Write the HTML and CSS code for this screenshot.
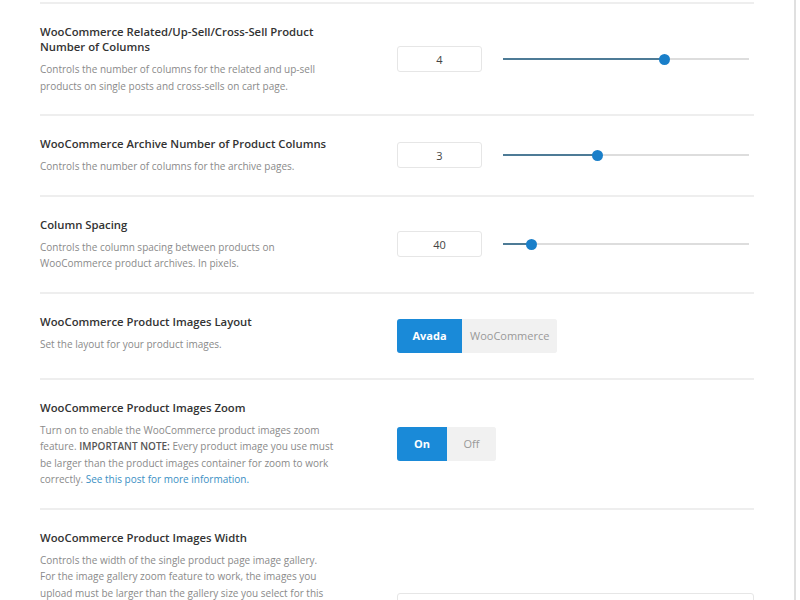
FILE: index.html
```html
<!DOCTYPE html>
<html lang="en">
<head>
  <meta charset="UTF-8">
  <meta name="viewport" content="width=device-width, initial-scale=1.0">
  <title>WooCommerce Options</title>
  <link rel="stylesheet" href="styles.css">
</head>
<body>
  <div class="options-panel">
    <div class="option-list">

      <div class="option-row">
        <div class="option-info">
          <h3>WooCommerce Related/Up-Sell/Cross-Sell Product Number of Columns</h3>
          <p>Controls the number of columns for the related and up-sell products on single posts and cross-sells on cart page.</p>
        </div>
        <div class="option-field">
          <input type="text" class="value-box" value="4">
          <div class="slider">
            <div class="slider-fill" style="width: 65.5%;"></div>
            <span class="slider-thumb" style="left: 65.5%;"></span>
          </div>
        </div>
      </div>

      <div class="option-row">
        <div class="option-info">
          <h3>WooCommerce Archive Number of Product Columns</h3>
          <p>Controls the number of columns for the archive pages.</p>
        </div>
        <div class="option-field">
          <input type="text" class="value-box" value="3">
          <div class="slider">
            <div class="slider-fill" style="width: 38.5%;"></div>
            <span class="slider-thumb" style="left: 38.5%;"></span>
          </div>
        </div>
      </div>

      <div class="option-row">
        <div class="option-info">
          <h3>Column Spacing</h3>
          <p>Controls the column spacing between products on WooCommerce product archives. In pixels.</p>
        </div>
        <div class="option-field">
          <input type="text" class="value-box" value="40">
          <div class="slider">
            <div class="slider-fill" style="width: 11.7%;"></div>
            <span class="slider-thumb" style="left: 11.7%;"></span>
          </div>
        </div>
      </div>

      <div class="option-row">
        <div class="option-info">
          <h3>WooCommerce Product Images Layout</h3>
          <p>Set the layout for your product images.</p>
        </div>
        <div class="option-field">
          <div class="button-set">
            <button type="button" class="active">Avada</button>
            <button type="button">WooCommerce</button>
          </div>
        </div>
      </div>

      <div class="option-row">
        <div class="option-info">
          <h3>WooCommerce Product Images Zoom</h3>
          <p>Turn on to enable the WooCommerce product images zoom feature. <strong>IMPORTANT NOTE:</strong> Every product image you use must be larger than the product images container for zoom to work correctly. <a href="#">See this post for more information.</a></p>
        </div>
        <div class="option-field">
          <div class="button-set switch">
            <button type="button" class="active">On</button>
            <button type="button">Off</button>
          </div>
        </div>
      </div>

      <div class="option-row">
        <div class="option-info">
          <h3>WooCommerce Product Images Width</h3>
          <p>Controls the width of the single product page image gallery. For the image gallery zoom feature to work, the images you upload must be larger than the gallery size you select for this option. Enter value including any valid CSS unit, ex: 500px.</p>
        </div>
        <div class="option-field field-top">
          <input type="text" class="text-box" value="">
        </div>
      </div>

    </div>
  </div>
</body>
</html>
```

FILE: styles.css
```css
html, body {
  margin: 0;
  padding: 0;
  background: #fff;
}
body {
  font-family: "Open Sans", "Noto Sans", Arial, sans-serif;
  color: #333;
}
.options-panel {
  width: 794px;
  height: 600px;
  overflow: hidden;
  border-right: 2px solid #e0e0e0;
}
.option-list {
  margin: 2px 40px 0;
  border-top: 2px solid #eeeeee;
}
.option-row {
  display: grid;
  grid-template-columns: 294.5px 1fr;
  column-gap: 62.5px;
  align-items: center;
  padding: 20px 0;
  border-bottom: 2px solid #eeeeee;
}
.option-info {
  align-self: start;
}
.option-info h3 {
  margin: 0 0 7px;
  font-size: 11.3px;
  font-weight: 600;
  line-height: 15px;
  color: #333;
}
.option-info p {
  margin: 0;
  font-size: 10px;
  line-height: 16.5px;
  color: #8a8a8a;
}
.option-info p strong {
  color: #555;
  font-weight: 600;
}
.option-info p a {
  color: #3a8fc4;
  text-decoration: none;
}

/* number box + range slider */
.option-field {
  display: flex;
  align-items: center;
}
.value-box {
  box-sizing: border-box;
  width: 85px;
  height: 26px;
  border: 1px solid #e6e6e6;
  border-radius: 3px;
  text-align: center;
  font-family: inherit;
  font-size: 11px;
  color: #444;
  padding: 0;
}
.slider {
  position: relative;
  flex: 1;
  height: 2px;
  margin: 0 5px 0 21px;
  background: #dddddd;
}
.slider-fill {
  height: 100%;
  background: #4d7b96;
}
.slider-thumb {
  position: absolute;
  top: 50%;
  width: 11px;
  height: 11px;
  margin: -5.5px 0 0 -5.5px;
  border-radius: 50%;
  background: #1a7fc9;
}

/* segmented buttons */
.button-set {
  display: flex;
  margin: 5px 0;
  border-radius: 3px;
  overflow: hidden;
  background: #f1f1f1;
}
.button-set button {
  height: 34px;
  padding: 0 8px;
  border: none;
  background: #f1f1f1;
  font-family: inherit;
  font-size: 11px;
  color: #999;
  cursor: pointer;
}
.button-set button.active {
  width: 65px;
  background: #1a8ad8;
  color: #fff;
  font-weight: 700;
}
.button-set.switch button {
  width: 49px;
  padding: 0;
}
.button-set.switch button.active {
  width: 50px;
}

.field-top {
  align-self: start;
  margin-top: 63px;
}
.text-box {
  box-sizing: border-box;
  width: 100%;
  height: 30px;
  border: 1px solid #e6e6e6;
  border-radius: 3px;
}
```
